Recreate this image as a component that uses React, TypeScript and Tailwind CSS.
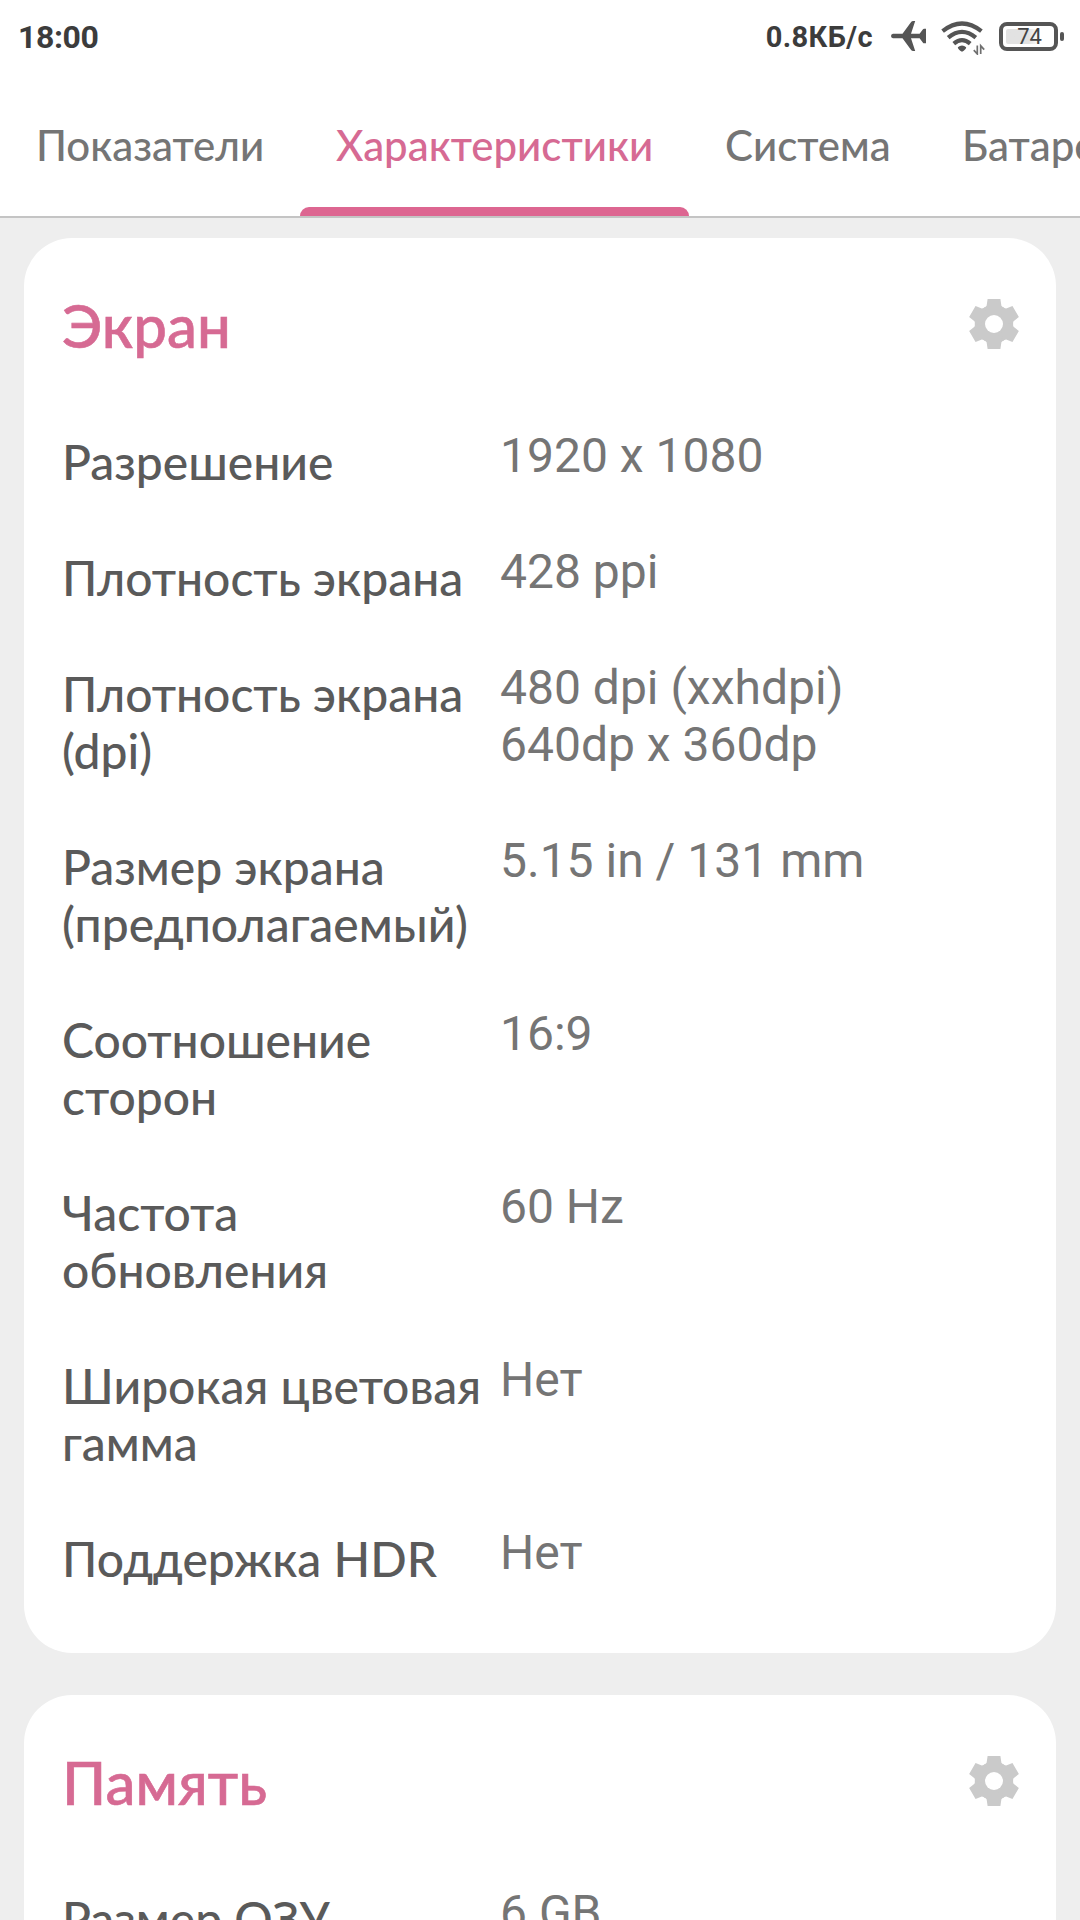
import React from 'react';

const screenRows = [
  { label: ['Разрешение'], value: ['1920 x 1080'] },
  { label: ['Плотность экрана'], value: ['428 ppi'] },
  { label: ['Плотность экрана', '(dpi)'], value: ['480 dpi (xxhdpi)', '640dp x 360dp'] },
  { label: ['Размер экрана', '(предполагаемый)'], value: ['5.15 in / 131 mm'] },
  { label: ['Соотношение', 'сторон'], value: ['16:9'] },
  { label: ['Частота', 'обновления'], value: ['60 Hz'] },
  { label: ['Широкая цветовая', 'гамма'], value: ['Нет'] },
  { label: ['Поддержка HDR'], value: ['Нет'] },
];

const memoryRows = [{ label: ['Размер ОЗУ'], value: ['6 GB'] }];

function Gear() {
  return (
    <svg viewBox="-25 -25 50 50" className="mt-[61px] -mr-px size-[50px] overflow-visible">
      <g fill="#cacaca">
        <circle r="18.7" />
        {[0, 60, 120, 180, 240, 300].map((a) => (
          <path key={a} d="M-6.4-25H6.4L7.4-18.3Q8.5-16.8 10.4-16.1L0-8L-10.4-16.1Q-8.5-16.8-7.4-18.3Z" transform={`rotate(${a})`} />
        ))}
      </g>
      <circle r="9" fill="#fff" />
    </svg>
  );
}

function Airplane() {
  return (
    <svg viewBox="0 0 35 30" className="h-[30px] w-[35px] fill-[#555555]">
      <path d="M2 12.7H11.5L20.3 .8Q21 0 22 0H24.2L20 12.7H28.6L32 8.3Q32.4 7.8 33 7.8H35V22.2H33Q32.4 22.2 32 21.7L28.6 17.3H20L24.2 30H22Q21 30 20.3 29.2L11.5 17.3H2Q0 16.8 0 15T2 12.7Z" />
    </svg>
  );
}

function Wifi() {
  return (
    <svg viewBox="0 0 44 34" className="mt-[3px] h-[34px] w-[44px]" fill="none" stroke="#555555">
      <path d="M1.6 10.2Q21 -5.2 40.4 10.2" strokeWidth="4.2" />
      <path d="M7.2 16.6Q21 5.2 34.8 16.6" strokeWidth="4.2" />
      <path d="M12.8 22.6Q21 15.8 29.2 22.6" strokeWidth="4.2" />
      <path d="M16.8 26.2Q21 22.6 25.2 26.2Q25 28.5 21 30.8Q17 28.5 16.8 26.2Z" fill="#555555" stroke="none" />
      <path d="M36.3 24.5V33L32.8 29.2M39.7 33V24.8L43.2 28.6" strokeWidth="1.7" stroke="#707070" />
    </svg>
  );
}

function Battery() {
  return (
    <div className="flex items-center gap-[2px]">
      <div className="flex h-[29px] w-[59px] items-center justify-center rounded-[8px] border-4 border-[#555555] bg-white p-[3px]">
        <div className="flex h-[15px] w-full items-center justify-center rounded-[2px] bg-linear-to-r from-[#e2e2e2] from-50% to-white to-75% font-['Roboto'] text-[22px] leading-none text-[#444444]">
          <span className="translate-x-px translate-y-px">74</span>
        </div>
      </div>
      <div className="h-[9px] w-[4px] rounded-[2px] bg-[#555555]" />
    </div>
  );
}

function Row({ label, value }: { label: string[]; value: string[] }) {
  return (
    <div className="grid grid-cols-[438px_1fr] items-start">
      <div className="pt-[6px] font-['Lato'] text-[48px] leading-[57px] font-medium text-[#5a5a5a]">
        {label.map((t) => <div key={t} className="whitespace-nowrap">{t}</div>)}
      </div>
      <div className="font-['Roboto'] text-[48px] leading-[57px] text-[#757575]">
        {value.map((t) => <div key={t} className="whitespace-nowrap">{t}</div>)}
      </div>
    </div>
  );
}

function Card({ title, rows }: { title: string; rows: typeof screenRows }) {
  return (
    <section className="shrink-0 rounded-[48px] bg-white px-[38px] pb-[66px]">
      <div className="flex h-[189px] items-start justify-between">
        <h2 className="pt-[53px] font-['Lato'] text-[60px] leading-[68px] font-medium text-[#d66a93] [-webkit-text-stroke:0.6px_#d66a93]">{title}</h2>
        <Gear />
      </div>
      <div className="flex flex-col gap-[53px]">
        {rows.map((r) => <Row key={r.label.join()} {...r} />)}
      </div>
    </section>
  );
}

export default function App() {
  return (
    <div className="flex h-[1920px] w-[1080px] flex-col overflow-hidden bg-[#eeeeee]">
      <header className="h-[218px] shrink-0 bg-white">
        <div className="flex h-[72px] items-center justify-between pr-[16px] pl-[18px] font-['Roboto'] text-[#3c3c3c]">
          <span className="pt-[2px] text-[32px] leading-none font-bold tracking-[-0.4px]">18:00</span>
          <div className="flex items-center">
            <span className="pt-[2px] pr-[18px] text-[29px] leading-none font-bold tracking-[0.4px]">0.8КБ/с</span>
            <Airplane />
            <div className="w-[15px]" />
            <Wifi />
            <div className="w-[14px]" />
            <Battery />
          </div>
        </div>
        <nav className="flex h-[146px] overflow-hidden border-b-2 border-[#c4c4c4] font-['Lato'] text-[42px] leading-[63px] font-medium whitespace-nowrap text-[#757575]">
          <div className="w-[300px] shrink-0 pt-[42px] pl-[36px]">Показатели</div>
          <div className="flex w-[389px] shrink-0 flex-col justify-between pt-[42px] text-[#d66a93]">
            <span className="pl-[36px]">Характеристики</span>
            <div className="h-[9px] rounded-t-[9px] bg-[#dd6691]" />
          </div>
          <div className="w-[237px] shrink-0 pt-[42px] pl-[36px]">Система</div>
          <div className="shrink-0 pt-[42px] pl-[36px]">Батарея</div>
        </nav>
      </header>
      <main className="flex flex-col gap-[42px] px-[24px] pt-[20px]">
        <Card title="Экран" rows={screenRows} />
        <Card title="Память" rows={memoryRows} />
      </main>
    </div>
  );
}
